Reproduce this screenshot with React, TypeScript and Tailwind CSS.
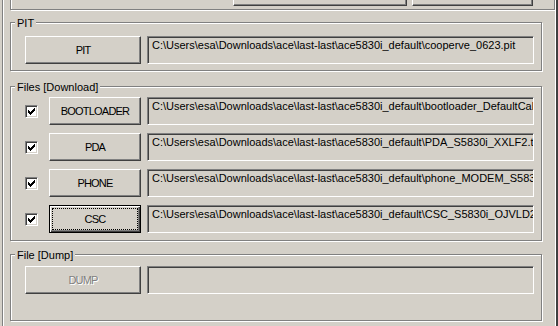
const DIR = "C:\\Users\\esa\\Downloads\\ace\\last-last\\ace5830i_default\\";

// classic 7x7 check glyph
const CHECK = ["......X", ".....XX", "X...XXX", "XX.XXX.", "XXXXX..", ".XXX...", "..X...."];

function Checkbox() {
  return (
    <div className="w-[13px] h-[13px] shrink-0 bg-white border border-t-[#808080] border-l-[#808080] border-r-white border-b-white shadow-[inset_1px_1px_0_#404040,inset_-1px_-1px_0_#d4d0c8] flex items-center justify-center">
      <svg width="7" height="7" viewBox="0 0 7 7" shapeRendering="crispEdges">
        {CHECK.flatMap((row, y) =>
          row.split("").map((c, x) =>
            c === "X" ? <rect key={`${x}-${y}`} x={x} y={y} width="1" height="1" fill="#000" /> : null
          )
        )}
      </svg>
    </div>
  );
}

function Btn({ label, w, focused, disabled }: { label?: string; w: string; focused?: boolean; disabled?: boolean }) {
  const frame = focused
    ? "border border-black shadow-[inset_1px_1px_0_#fff,inset_-1px_-1px_0_#404040,inset_-2px_-2px_0_#808080]"
    : "border border-t-white border-l-white border-r-[#404040] border-b-[#404040] shadow-[inset_-1px_-1px_0_#808080]";
  return (
    <div className={`relative h-[28px] shrink-0 flex items-center justify-center tracking-[-0.8px] ${w} ${frame} ${disabled ? "text-[#808080] [text-shadow:1px_1px_0_#fff]" : "text-black"}`}>
      {focused && <span className="absolute inset-[2px] border border-dotted border-black" />}
      <span className="relative">{label}</span>
    </div>
  );
}

function Field({ text }: { text?: string }) {
  return (
    <div className="w-[387px] h-[28px] shrink-0 border border-t-[#808080] border-l-[#808080] border-r-white border-b-white shadow-[inset_1px_1px_0_#404040] pl-[4px] pt-[2px] overflow-hidden whitespace-nowrap leading-[13px]">
      {text}
    </div>
  );
}

function Group({ title, className, children }: { title: string; className: string; children: React.ReactNode }) {
  return (
    <div className={`relative w-[532px] border border-[#808080] shadow-[inset_1px_1px_0_#fff,1px_1px_0_#fff] ${className}`}>
      <span className="absolute top-[-6px] left-[4px] px-[2px] bg-[#d4d0c8] leading-[13px]">{title}</span>
      {children}
    </div>
  );
}

const files = [
  { name: "BOOTLOADER", file: "bootloader_DefaultCal_S5830iXXLF2.tar.md5" },
  { name: "PDA", file: "PDA_S5830i_XXLF2.tar.md5" },
  { name: "PHONE", file: "phone_MODEM_S5830i_XXLF2.tar.md5" },
  { name: "CSC", file: "CSC_S5830i_OJVLD2. tar.md5", focused: true },
];

export default function App() {
  return (
    <div className="w-[558px] h-[326px] bg-[#d4d0c8] flex overflow-hidden font-['Liberation_Sans',Arial,sans-serif] text-[11px] text-black">
      <div className="w-[2px] shrink-0" />
      <div className="flex-1 flex flex-col pl-[7px] border-l border-l-[#808080] border-r-2 border-r-[#404040] shadow-[inset_1px_0_0_#fff,inset_-1px_0_0_#fff]">
        {/* top panel, mostly scrolled off */}
        <div className="w-[545px] h-[30px] mt-[-20px] shrink-0 border border-[#808080] shadow-[inset_1px_1px_0_#fff,1px_1px_0_#fff] flex items-end justify-end gap-[5px] pr-[21px] pb-[3px]">
          <Btn w="w-[174px]" />
          <Btn w="w-[121px]" />
        </div>

        <Group title="PIT" className="mt-[12px] h-[49px] shrink-0 pt-[13px] pl-[14px]">
          <div className="flex gap-[6px]">
            <Btn label="PIT" w="w-[116px]" />
            <Field text={DIR + "cooperve_0623.pit"} />
          </div>
        </Group>

        <Group title="Files [Download]" className="mt-[15px] h-[155px] shrink-0 pt-[10px] pl-[14px] flex flex-col gap-[8px]">
          {files.map((f) => (
            <div key={f.name} className="flex items-center">
              <Checkbox />
              <div className="ml-[11px] mr-[6px]">
                <Btn label={f.name} w="w-[92px]" focused={f.focused} />
              </div>
              <Field text={DIR + f.file} />
            </div>
          ))}
        </Group>

        <Group title="File [Dump]" className="mt-[13px] h-[67px] shrink-0 pt-[11px] pl-[14px]">
          <div className="flex gap-[6px]">
            <Btn label="DUMP" w="w-[116px]" disabled />
            <Field />
          </div>
        </Group>
      </div>
    </div>
  );
}
